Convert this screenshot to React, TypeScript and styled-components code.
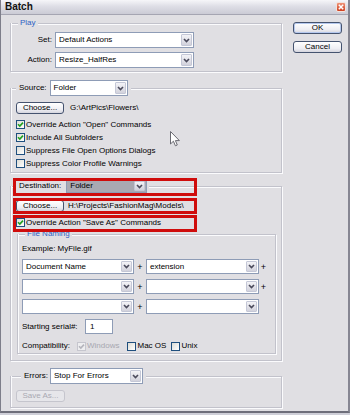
import React from "react";
import styled, { createGlobalStyle } from "styled-components";

const GlobalStyle = createGlobalStyle`
  html, body { margin: 0; padding: 0; background: #cfcfd8; }
  body {
    font-family: "Liberation Sans", Arial, sans-serif;
    font-size: 8px;
    line-height: 10px;
    color: #000;
  }
  * { box-sizing: border-box; }
`;

const Window = styled.div`
  position: relative;
  width: 350px;
  height: 413px;
  display: flex;
  flex-direction: column;
  background: #e0dfe3;
  border-left: 1px solid #7e7e8a;
  border-right: 2px solid #868692;
  border-bottom: 2px solid #6e6e7a;
  overflow: hidden;
`;

const TitleBar = styled.div`
  flex: none;
  height: 15px;
  display: flex;
  align-items: center;
  justify-content: space-between;
  padding: 0 2px 1px 4px;
  background: linear-gradient(#f6f6f9, #dedee6 45%, #cbcbd5);
  border-bottom: 1px solid #a5a5b2;
`;

const Title = styled.span`
  font-weight: bold;
  font-size: 10px;
  line-height: 12px;
  color: #111;
`;

const CloseButton = styled.span`
  width: 10px;
  height: 10px;
  border-radius: 2px;
  border: 1px solid #f3e2dc;
  background: linear-gradient(#ee9277, #cf3f1f);
  display: flex;
  align-items: center;
  justify-content: center;
`;

const Content = styled.div`
  flex: 1;
  display: flex;
  align-items: flex-start;
  gap: 11px;
  padding: 3px 0 0 9px;
`;

const MainCol = styled.div`
  width: 272px;
  display: flex;
  flex-direction: column;
`;

const SideCol = styled.div`
  width: 49px;
  padding-top: 4px;
  display: flex;
  flex-direction: column;
  gap: 7px;
`;

const Group = styled.div<{ $mt?: number; $ml?: number }>`
  position: relative;
  display: flex;
  flex-direction: column;
  margin-top: ${(p) => p.$mt ?? 0}px;
  margin-left: ${(p) => p.$ml ?? 0}px;
`;

const Head = styled.div<{ $h: number }>`
  height: ${(p) => p.$h}px;
  display: flex;
  align-items: center;
`;

const Rule = styled.span<{ $top: number; $w?: number; $ml?: number }>`
  align-self: flex-start;
  margin-top: ${(p) => p.$top}px;
  margin-left: ${(p) => p.$ml ?? 0}px;
  height: 1px;
  background: #c2c2cb;
  box-shadow: 0 1px 0 #fbfbfd;
  flex: ${(p) => (p.$w != null ? `0 0 ${p.$w}px` : "1 1 0")};
`;

const Frame = styled.div<{ $up: number; $pad: string }>`
  margin-top: -${(p) => p.$up}px;
  border: 1px solid #c2c2cb;
  border-top: none;
  box-shadow: inset 1px 0 0 #fbfbfd, 1px 1px 0 #fbfbfd;
  padding: ${(p) => p.$pad};
  display: flex;
  flex-direction: column;
`;

const Legend = styled.span`
  padding: 0 2px;
  color: #2f5fc4;
  white-space: nowrap;
`;

const HeadLabel = styled.span<{ $pr: number }>`
  padding: 0 ${(p) => p.$pr}px 0 3px;
  white-space: nowrap;
`;

const SelectBox = styled.div<{ $w: number; $h: number; $bg?: string; $ml?: number }>`
  flex: none;
  width: ${(p) => p.$w}px;
  height: ${(p) => p.$h}px;
  margin-left: ${(p) => p.$ml ?? 0}px;
  display: flex;
  align-items: stretch;
  border: 1px solid #8e9cb6;
  background: ${(p) => p.$bg ?? "#fff"};
`;

const SelectValue = styled.span`
  flex: 1;
  display: flex;
  align-items: center;
  padding-left: 3px;
  white-space: nowrap;
  overflow: hidden;
`;

const DropButton = styled.span`
  flex: none;
  width: 11px;
  margin: 1px;
  border: 1px solid #c4c7d6;
  border-radius: 1px;
  background: linear-gradient(#f3f3f7, #d2d2dc);
  display: flex;
  align-items: center;
  justify-content: center;
`;

const FormGrid = styled.div`
  display: grid;
  grid-template-columns: 33px 139px;
  column-gap: 3px;
  row-gap: 4px;
  align-items: center;
`;

const FieldLabel = styled.span`
  text-align: right;
  white-space: nowrap;
`;

const Button = styled.button<{ $w: number; $default?: boolean }>`
  flex: none;
  width: ${(p) => p.$w}px;
  height: 12px;
  padding: 0;
  font: inherit;
  font-size: 8px;
  line-height: 10px;
  color: ${(p) => (p.disabled ? "#a9a9b2" : "#000")};
  border: 1px solid ${(p) => (p.disabled ? "#c5c5cd" : "#45536f")};
  border-radius: 3px;
  background: ${(p) =>
    p.disabled ? "#e6e6ea" : "linear-gradient(#ffffff, #eeeef3 65%, #d5d5de)"};
  box-shadow: ${(p) => (p.$default ? "inset 0 0 0 1px #b5c8ee" : "none")};
`;

const ActionRow = styled.div<{ $gap: number }>`
  display: flex;
  align-items: center;
  gap: ${(p) => p.$gap}px;
  height: 12px;
  white-space: nowrap;
`;

const CheckRow = styled.div<{ $mt?: number; $ml?: number; $dim?: boolean }>`
  display: flex;
  align-items: center;
  gap: 1px;
  height: 13px;
  margin-top: ${(p) => p.$mt ?? 0}px;
  margin-left: ${(p) => p.$ml ?? 0}px;
  white-space: nowrap;
  color: ${(p) => (p.$dim ? "#a7a7b0" : "#000")};
`;

const Box = styled.span<{ $dim?: boolean }>`
  flex: none;
  width: 9px;
  height: 9px;
  border: 1px solid ${(p) => (p.$dim ? "#c6c6ce" : "#1f4f7e")};
  background: ${(p) => (p.$dim ? "#eeeef0" : "linear-gradient(135deg, #dcdcd6, #ffffff)")};
  display: flex;
  align-items: center;
  justify-content: center;
`;

const TextLine = styled.div<{ $h: number; $mt?: number }>`
  height: ${(p) => p.$h}px;
  margin-top: ${(p) => p.$mt ?? 0}px;
  display: flex;
  align-items: center;
  white-space: nowrap;
`;

const NameGrid = styled.div`
  margin-top: 4px;
  display: grid;
  grid-template-columns: 112px 12px 113px 9px;
  grid-auto-rows: 15px;
  row-gap: 5px;
  align-items: center;
`;

const Plus = styled.span`
  text-align: center;
  font-size: 9px;
`;

const SerialRow = styled.div`
  margin-top: 5px;
  height: 15px;
  display: grid;
  grid-template-columns: 63px 28px;
  align-items: center;
  white-space: nowrap;
`;

const NumberField = styled.div`
  height: 15px;
  border: 1px solid #8e9cb6;
  background: #fff;
  display: flex;
  align-items: center;
  padding-left: 4px;
`;

const CompatRow = styled.div`
  margin-top: 6px;
  height: 12px;
  display: flex;
  align-items: center;
  white-space: nowrap;
`;

const Highlight = styled.div<{ $top: number; $h: number }>`
  position: absolute;
  left: 3px;
  width: 184px;
  top: ${(p) => p.$top}px;
  height: ${(p) => p.$h}px;
  border: 3px solid #cf0c0c;
  pointer-events: none;
`;

const Pointer = styled.svg`
  position: absolute;
  left: 169px;
  top: 131px;
`;

const Chevron = () => (
  <svg width="7" height="5" viewBox="0 0 7 5">
    <path d="M1 1 L3.5 3.6 L6 1" fill="none" stroke="#4b4b5c" strokeWidth="1.6" />
  </svg>
);

const CheckMark = ({ dim }: { dim?: boolean }) => (
  <svg width="7" height="7" viewBox="0 0 7 7">
    <path
      d="M1 3.3 L2.8 5.1 L6 1.6"
      fill="none"
      stroke={dim ? "#b4b4bc" : "#21a121"}
      strokeWidth="1.6"
    />
  </svg>
);

function Select(props: { w: number; h: number; value?: string; bg?: string; ml?: number }) {
  return (
    <SelectBox $w={props.w} $h={props.h} $bg={props.bg} $ml={props.ml}>
      <SelectValue>{props.value ?? ""}</SelectValue>
      <DropButton>
        <Chevron />
      </DropButton>
    </SelectBox>
  );
}

function Check(props: { label: string; checked?: boolean; dim?: boolean; mt?: number; ml?: number }) {
  return (
    <CheckRow $mt={props.mt} $ml={props.ml} $dim={props.dim}>
      <Box $dim={props.dim}>{props.checked ? <CheckMark dim={props.dim} /> : null}</Box>
      <span>{props.label}</span>
    </CheckRow>
  );
}

function GroupBox(props: {
  h: number;
  lead: number;
  head: React.ReactNode;
  trail?: number;
  pad: string;
  mt?: number;
  ml?: number;
  overlay?: React.ReactNode;
  children: React.ReactNode;
}) {
  const top = Math.floor(props.h / 2);
  return (
    <Group $mt={props.mt} $ml={props.ml}>
      <Head $h={props.h}>
        <Rule $top={top} $w={props.lead} />
        {props.head}
        <Rule $top={top} $ml={props.trail ?? 0} />
      </Head>
      <Frame $up={props.h - top} $pad={props.pad}>
        {props.children}
      </Frame>
      {props.overlay}
    </Group>
  );
}

export default function App() {
  return (
    <>
      <GlobalStyle />
      <Window>
        <TitleBar>
          <Title>Batch</Title>
          <CloseButton>
            <svg width="6" height="6" viewBox="0 0 6 6">
              <path d="M0.8 0.8 L5.2 5.2 M5.2 0.8 L0.8 5.2" stroke="#fff" strokeWidth="1.5" />
            </svg>
          </CloseButton>
        </TitleBar>
        <Content>
          <MainCol>
            <GroupBox h={10} lead={8} head={<Legend>Play</Legend>} pad="9px 0 3px 8px">
              <FormGrid>
                <FieldLabel>Set:</FieldLabel>
                <Select w={139} h={16} value="Default Actions" />
                <FieldLabel>Action:</FieldLabel>
                <Select w={139} h={16} value="Resize_HalfRes" />
              </FormGrid>
            </GroupBox>

            <GroupBox
              mt={8}
              h={16}
              lead={6}
              trail={3}
              head={
                <>
                  <HeadLabel $pr={3}>Source:</HeadLabel>
                  <Select w={78} h={16} value="Folder" />
                </>
              }
              pad="14px 0 2px 5px"
            >
              <ActionRow $gap={6}>
                <Button $w={48}>Choose...</Button>
                <span>{"G:\\ArtPics\\Flowers\\"}</span>
              </ActionRow>
              <Check mt={4} checked label={'Override Action "Open" Commands'} />
              <Check checked label="Include All Subfolders" />
              <Check label="Suppress File Open Options Dialogs" />
              <Check label="Suppress Color Profile Warnings" />
            </GroupBox>

            <GroupBox
              mt={6}
              h={14}
              lead={6}
              trail={2}
              head={
                <>
                  <HeadLabel $pr={5}>Destination:</HeadLabel>
                  <Select w={81} h={14} value="Folder" bg="#a9a9b2" />
                </>
              }
              pad="14px 5px 6px 5px"
              overlay={
                <>
                  <Highlight $top={-1} $h={18} />
                  <Highlight $top={19} $h={16} />
                  <Highlight $top={36} $h={17} />
                </>
              }
            >
              <ActionRow $gap={4}>
                <Button $w={48}>Choose...</Button>
                <span>{"H:\\Projects\\FashionMag\\Models\\"}</span>
              </ActionRow>
              <Check mt={4} checked label={'Override Action "Save As" Commands'} />
              <GroupBox ml={1} h={10} lead={8} head={<Legend>File Naming</Legend>} pad="9px 0 1px 4px">
                <TextLine $h={12}>Example: MyFile.gif</TextLine>
                <NameGrid>
                  <Select w={112} h={15} value="Document Name" />
                  <Plus>+</Plus>
                  <Select w={113} h={15} value="extension" />
                  <Plus>+</Plus>
                  <Select w={112} h={15} />
                  <Plus>+</Plus>
                  <Select w={113} h={15} />
                  <Plus>+</Plus>
                  <Select w={112} h={15} />
                  <Plus>+</Plus>
                  <Select w={113} h={15} />
                  <span />
                </NameGrid>
                <SerialRow>
                  <span>Starting serial#:</span>
                  <NumberField>1</NumberField>
                </SerialRow>
                <CompatRow>
                  <span>Compatibility:</span>
                  <Check ml={7} checked dim label="Windows" />
                  <Check ml={8} label="Mac OS" />
                  <Check ml={5} label="Unix" />
                </CompatRow>
              </GroupBox>
            </GroupBox>

            <GroupBox
              mt={7}
              h={16}
              lead={11}
              trail={3}
              head={
                <>
                  <HeadLabel $pr={2}>Errors:</HeadLabel>
                  <Select w={93} h={16} value="Stop For Errors" />
                </>
              }
              pad="14px 0 5px 5px"
            >
              <ActionRow $gap={4}>
                <Button $w={49} disabled>
                  Save As...
                </Button>
              </ActionRow>
            </GroupBox>
          </MainCol>
          <SideCol>
            <Button $w={49} $default>
              OK
            </Button>
            <Button $w={49}>Cancel</Button>
          </SideCol>
        </Content>
        <Pointer width="11" height="17" viewBox="0 0 11 17">
          <path
            d="M0.5 0.5 L0.5 13 L3.4 10.2 L5.4 14.8 L7.3 14 L5.4 9.6 L9.4 9.6 Z"
            fill="#fff"
            stroke="#6a6a72"
            strokeWidth="1"
          />
        </Pointer>
      </Window>
    </>
  );
}
